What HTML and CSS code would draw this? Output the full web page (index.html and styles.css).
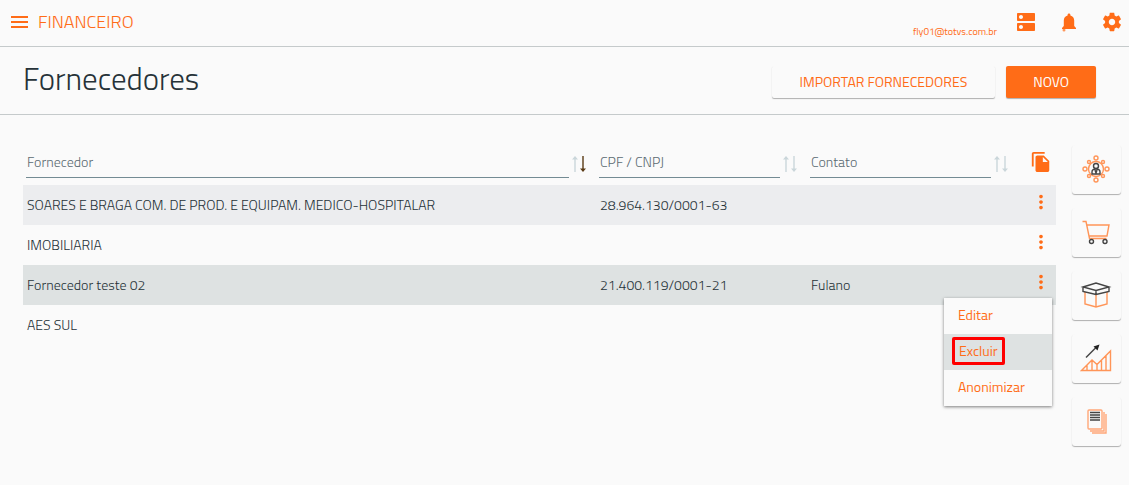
FILE: index.html
```
<!DOCTYPE html>
<html lang="pt-BR">
<head>
    <meta charset="UTF-8">
    <meta name="viewport" content="width=device-width, initial-scale=1.0">
    <title>Fornecedores</title>
    <link rel="stylesheet" href="styles.css">
</head>
<body>
    <!-- Shared icons -->
    <svg class="sprite" aria-hidden="true">
        <symbol id="icon-more" viewBox="0 0 24 24">
            <path d="M12 8c1.1 0 2-.9 2-2s-.9-2-2-2-2 .9-2 2 .9 2 2 2zm0 2c-1.1 0-2 .9-2 2s.9 2 2 2 2-.9 2-2-.9-2-2-2zm0 6c-1.1 0-2 .9-2 2s.9 2 2 2 2-.9 2-2-.9-2-2-2z"/>
        </symbol>
        <symbol id="icon-up" viewBox="0 0 8 16">
            <path d="M3.300 16V3.500H1L4 0l3 3.500H4.700V16z"/>
        </symbol>
        <symbol id="icon-down" viewBox="0 0 8 16">
            <path d="M3.300 0v12.500H1L4 16l3-3.500H4.700V0z"/>
        </symbol>
    </svg>

    <header class="topbar">
        <button class="icon-btn menu-btn" type="button" aria-label="Menu">
            <svg width="18" height="14" viewBox="0 0 18 14"><path d="M0 1h17v2H0zM0 6h17v2H0zM0 11h17v2H0z"/></svg>
        </button>
        <a class="brand" href="#">FINANCEIRO</a>
        <div class="topbar-right">
            <a class="user-email" href="#">fly01@totvs.com.br</a>
            <button class="icon-btn" type="button" aria-label="Empresas">
                <svg width="24" height="24" viewBox="0 0 24 24"><path d="M20 13H4c-.55 0-1 .45-1 1v6c0 .55.45 1 1 1h16c.55 0 1-.45 1-1v-6c0-.55-.45-1-1-1zM7 19c-1.1 0-2-.9-2-2s.9-2 2-2 2 .9 2 2-.9 2-2 2zM20 3H4c-.55 0-1 .45-1 1v6c0 .55.45 1 1 1h16c.55 0 1-.45 1-1V4c0-.55-.45-1-1-1zM7 9c-1.1 0-2-.9-2-2s.9-2 2-2 2 .9 2 2-.9 2-2 2z"/></svg>
            </button>
            <button class="icon-btn" type="button" aria-label="Notificações">
                <svg width="24" height="24" viewBox="0 0 24 24">
                    <path d="M12 3.500c-.8 0-1.400.6-1.400 1.400v.5C8.200 6 6.800 8 6.800 10.500V16L5 18v1h14v-1l-1.800-2v-5.500c0-2.500-1.400-4.500-3.800-5.100v-.5c0-.8-.6-1.400-1.400-1.400z"/>
                    <circle cx="7" cy="20" r="1.500" opacity=".7"/>
                </svg>
            </button>
            <button class="icon-btn" type="button" aria-label="Configurações">
                <svg width="24" height="24" viewBox="-1 -1 26 26"><path d="M19.430 12.980c.04-.32.07-.64.07-.98s-.03-.66-.07-.98l2.110-1.650c.19-.15.24-.42.12-.64l-2-3.460c-.12-.22-.39-.3-.61-.22l-2.490 1c-.52-.4-1.080-.73-1.690-.98l-.38-2.650C14.460 2.180 14.250 2 14 2h-4c-.25 0-.46.18-.49.42l-.38 2.650c-.61.25-1.170.59-1.690.98l-2.490-1c-.23-.09-.49 0-.61.22l-2 3.460c-.13.22-.07.49.12.64l2.110 1.650c-.04.32-.07.65-.07.98s.03.66.07.98l-2.110 1.650c-.19.15-.24.42-.12.64l2 3.460c.12.22.39.3.61.22l2.490-1c.52.4 1.080.73 1.690.98l.38 2.650c.03.24.24.42.49.42h4c.25 0 .46-.18.49-.42l.38-2.650c.61-.25 1.170-.59 1.690-.98l2.490 1c.23.09.49 0 .61-.22l2-3.460c.12-.22.07-.49-.12-.64l-2.110-1.650zM12 15.500c-1.930 0-3.500-1.570-3.500-3.500s1.570-3.500 3.500-3.500 3.500 1.570 3.500 3.500-1.570 3.500-3.500 3.500z"/></svg>
            </button>
        </div>
    </header>

    <div class="page-header">
        <h1>Fornecedores</h1>
        <div class="page-actions">
            <button class="btn btn-flat" type="button">IMPORTAR FORNECEDORES</button>
            <button class="btn btn-primary" type="button">NOVO</button>
        </div>
    </div>

    <main class="content">
        <table class="suppliers">
            <colgroup>
                <col>
                <col class="col-data">
                <col class="col-data">
                <col class="col-actions">
            </colgroup>
            <thead>
                <tr>
                    <th>
                        <div class="filter">
                            <input type="text" placeholder="Fornecedor" aria-label="Fornecedor">
                            <button class="sort sort-desc" type="button" aria-label="Ordenar por fornecedor">
                                <svg width="8" height="16"><use href="#icon-up"/></svg><svg width="8" height="16"><use href="#icon-down"/></svg>
                            </button>
                        </div>
                    </th>
                    <th>
                        <div class="filter">
                            <input type="text" placeholder="CPF / CNPJ" aria-label="CPF / CNPJ">
                            <button class="sort" type="button" aria-label="Ordenar por CPF / CNPJ">
                                <svg width="8" height="16"><use href="#icon-up"/></svg><svg width="8" height="16"><use href="#icon-down"/></svg>
                            </button>
                        </div>
                    </th>
                    <th>
                        <div class="filter">
                            <input type="text" placeholder="Contato" aria-label="Contato">
                            <button class="sort" type="button" aria-label="Ordenar por contato">
                                <svg width="8" height="16"><use href="#icon-up"/></svg><svg width="8" height="16"><use href="#icon-down"/></svg>
                            </button>
                        </div>
                    </th>
                    <th class="actions">
                        <button class="icon-btn" type="button" aria-label="Copiar">
                            <svg width="22" height="22" viewBox="0 0 24 24"><path d="M16 1H4c-1.100 0-2 .9-2 2v14h2V3h12V1zm-1 4l6 6v10c0 1.100-.9 2-2 2H7.990C6.890 23 6 22.100 6 21l.01-14c0-1.100.89-2 1.990-2h7zm-1 7h5.500L14 6.500V12z"/></svg>
                        </button>
                    </th>
                </tr>
            </thead>
            <tbody>
                <tr class="striped">
                    <td>SOARES E BRAGA COM. DE PROD. E EQUIPAM. MEDICO-HOSPITALAR</td>
                    <td>28.964.130/0001-63</td>
                    <td></td>
                    <td class="actions">
                        <button class="icon-btn" type="button" aria-label="Ações"><svg width="22" height="22"><use href="#icon-more"/></svg></button>
                    </td>
                </tr>
                <tr>
                    <td>IMOBILIARIA</td>
                    <td></td>
                    <td></td>
                    <td class="actions">
                        <button class="icon-btn" type="button" aria-label="Ações"><svg width="22" height="22"><use href="#icon-more"/></svg></button>
                    </td>
                </tr>
                <tr class="selected">
                    <td>Fornecedor teste 02</td>
                    <td>21.400.119/0001-21</td>
                    <td>Fulano</td>
                    <td class="actions">
                        <button class="icon-btn" type="button" aria-label="Ações" aria-expanded="true"><svg width="22" height="22"><use href="#icon-more"/></svg></button>
                        <div class="dropdown">
                            <button type="button">Editar</button>
                            <button class="active" type="button"><span class="highlight">Excluir</span></button>
                            <button type="button">Anonimizar</button>
                        </div>
                    </td>
                </tr>
                <tr>
                    <td>AES SUL</td>
                    <td></td>
                    <td></td>
                    <td class="actions">
                        <button class="icon-btn" type="button" aria-label="Ações"><svg width="22" height="22"><use href="#icon-more"/></svg></button>
                    </td>
                </tr>
            </tbody>
        </table>

        <nav class="shortcuts" aria-label="Atalhos">
            <button type="button" aria-label="Clientes">
                <svg width="32" height="32" viewBox="0 0 32 32">
                    <g class="line">
                        <circle cx="16" cy="16" r="7.500"/>
                        <circle cx="16" cy="5" r="2"/><circle cx="16" cy="27" r="2"/>
                        <circle cx="5" cy="16" r="2"/><circle cx="27" cy="16" r="2"/>
                        <circle cx="9" cy="9" r="1.500"/><circle cx="23" cy="9" r="1.500"/>
                        <circle cx="9" cy="23" r="1.500"/><circle cx="23" cy="23" r="1.500"/>
                    </g>
                    <g class="line dark">
                        <circle cx="16" cy="13" r="2.500"/>
                        <path d="M12 21v-2c0-2 1.500-3 4-3s4 1 4 3v2zM15 17l1 3 1-3"/>
                    </g>
                </svg>
            </button>
            <button type="button" aria-label="Compras">
                <svg width="32" height="32" viewBox="0 0 32 32">
                    <path class="line" d="M2.500 5.500h3.500l3.500 17h17M7 9h22l-2 11H9"/>
                    <g class="line dark"><circle cx="11.500" cy="25.500" r="2"/><circle cx="25" cy="25.500" r="2"/></g>
                </svg>
            </button>
            <button type="button" aria-label="Estoque">
                <svg width="32" height="32" viewBox="0 0 32 32">
                    <path class="line" d="M5 13v12l11 3 11-3V13M16 15v13"/>
                    <path class="line dark" d="M3 8l13-4 13 4-13 3.500zM3 8v4.500l13 3 13-3V8M16 11.500v4"/>
                </svg>
            </button>
            <button type="button" aria-label="Vendas">
                <svg width="32" height="32" viewBox="0 0 32 32">
                    <path class="line" d="M1.500 28.500L12 18l5 4.500L30.500 9v19.500zM7 23v5.500M12 18v10.500M17 22.500v6M21.500 18v10.500M26 14v14.500"/>
                    <path class="line dark" d="M6 15.500L16 5.500"/>
                    <path class="arrow" d="M19.500 2.500l-2 6-4-4z"/>
                </svg>
            </button>
            <button type="button" aria-label="Relatórios">
                <svg width="32" height="32" viewBox="0 0 32 32">
                    <g class="line soft">
                        <rect x="8" y="5" width="14" height="19" rx="1"/>
                        <path d="M10 26h14V7M12 28h14V9"/>
                    </g>
                    <path class="line dark" d="M10 7.500h10M10 10h10M10 12.500h10M10 15h10"/>
                </svg>
            </button>
        </nav>
    </main>
</body>
</html>
```
FILE: styles.css
```
* {
    box-sizing: border-box;
}

body {
    margin: 0;
    background: #fafafa;
    color: #263238;
    font-family: "Titillium Web", Roboto, "Liberation Sans", sans-serif;
    font-size: 14px;
    font-weight: 300;
}

button,
input {
    font: inherit;
}

button {
    cursor: pointer;
}

a {
    color: #ff6c17;
    text-decoration: none;
}

svg {
    display: block;
}

.sprite {
    display: none;
}

.icon-btn {
    padding: 0;
    border: none;
    background: none;
    color: #ff6c17;
}

.icon-btn svg {
    fill: currentColor;
}

/* Top bar */
.topbar {
    display: flex;
    align-items: center;
    height: 47px;
    padding: 0 5px 2px 11px;
    border-bottom: 1px solid #c5cacb;
}

.brand {
    margin-left: 9px;
    padding-bottom: 1px;
    font-size: 18px;
}

.topbar-right {
    display: flex;
    align-items: center;
    gap: 19px;
    margin-left: auto;
}

.user-email {
    align-self: flex-end;
    margin-right: -2px;
    font-size: 10px;
    font-weight: 400;
    line-height: 4px;
}

/* Page title */
.page-header {
    display: flex;
    align-items: center;
    justify-content: space-between;
    height: 68px;
    padding: 0 33px 2px 23px;
    border-bottom: 1px solid #c5cacb;
}

h1 {
    margin: 0;
    padding-bottom: 2px;
    font-size: 31px;
    font-weight: 300;
}

.page-actions {
    display: flex;
    gap: 11px;
    padding-top: 4px;
}

.btn {
    height: 32px;
    padding: 0 27px;
    border: none;
    border-radius: 2px;
    box-shadow: 0 1px 1px rgba(0, 0, 0, 0.3);
    font-weight: 400;
}

.btn-flat {
    padding: 0 28px;
    background: #fafafa;
    color: #ff6c17;
}

.btn-primary {
    background: #ff6c17;
    color: #fff;
}

/* Content */
.content {
    display: flex;
    align-items: flex-start;
    gap: 16px;
    padding: 30px 8px 30px 23px;
}

.suppliers {
    flex: 1;
    border-collapse: collapse;
    table-layout: fixed;
}

.col-data {
    width: 211px;
}

.col-actions {
    width: 38px;
}

.suppliers th {
    height: 40px;
    padding: 0;
    font-weight: 300;
}

.suppliers td {
    height: 40px;
    padding: 0 4px 2px;
}

.suppliers .striped {
    background: #ecedef;
}

.suppliers .selected {
    background: #dee2e2;
}

.suppliers .actions {
    position: relative;
    padding: 0 4px 6px 12px;
}

.actions .icon-btn {
    display: block;
}

.filter {
    display: flex;
    align-items: center;
    gap: 2px;
    padding: 2px 9px 7px 3px;
}

.filter input {
    flex: 1;
    min-width: 0;
    height: 31px;
    padding: 0 1px 2px;
    border: none;
    border-bottom: 1px solid #738b93;
    border-radius: 0;
    background: transparent;
    color: #263238;
}

.filter input::placeholder {
    color: #5a6b72;
    opacity: 1;
}

.sort {
    display: flex;
    padding: 2px 0 0;
    border: none;
    background: none;
}

.sort svg {
    fill: #cad6da;
}

.sort-desc svg:last-child {
    fill: #5a3a14;
}

/* Row menu */
.dropdown {
    position: absolute;
    top: 33px;
    right: 4px;
    z-index: 1;
    width: 108px;
    background: #fafafa;
    box-shadow: 0 1px 3px rgba(0, 0, 0, 0.5);
}

.dropdown button {
    display: flex;
    align-items: center;
    width: 100%;
    height: 36px;
    padding: 0 14px 4px;
    border: none;
    background: none;
    color: #ff6c17;
    font-weight: 400;
}

.dropdown .active {
    padding: 0 8px 2px;
    background: #dee2e2;
}

.highlight {
    padding: 0 4px 1px;
    border: 3px solid #f00;
    border-radius: 2px;
}

/* Side shortcuts */
.shortcuts {
    display: flex;
    flex-direction: column;
    gap: 14px;
}

.shortcuts button {
    display: flex;
    align-items: center;
    justify-content: center;
    width: 49px;
    height: 49px;
    padding: 0 1px 2px 0;
    border: none;
    border-radius: 3px;
    background: #fafafa;
    box-shadow: 0 1px 1px rgba(0, 0, 0, 0.3);
}

.line {
    fill: none;
    stroke: #ff9558;
    stroke-width: 1.4;
}

.soft {
    stroke: #ffa778;
}

.dark {
    stroke: #444;
}

.arrow {
    fill: #222;
}
```
